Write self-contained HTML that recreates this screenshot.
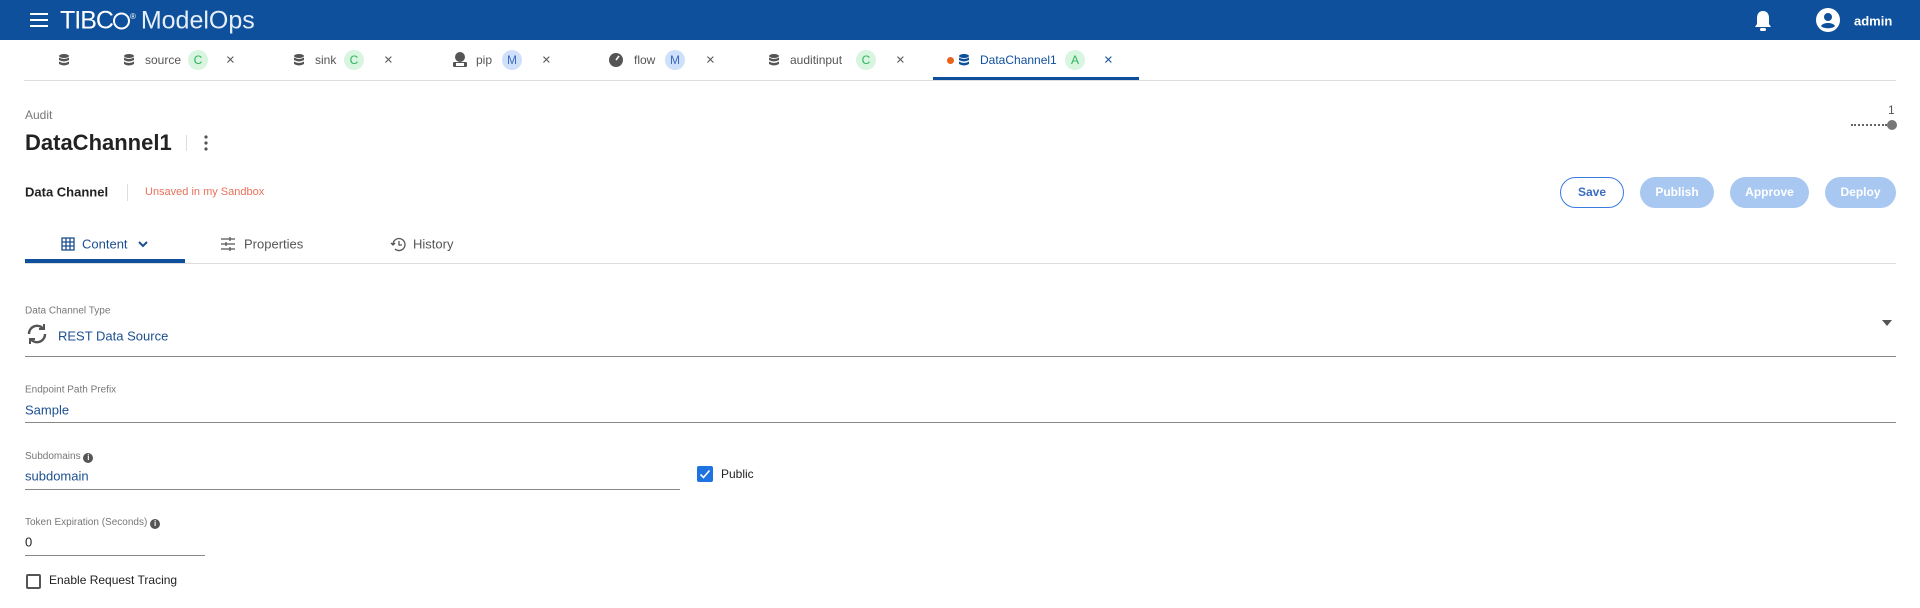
<!DOCTYPE html>
<html><head><meta charset="utf-8"><style>
*{margin:0;padding:0;box-sizing:border-box}
body{width:1920px;height:608px;background:#fff;font-family:"Liberation Sans",sans-serif;position:relative;overflow:hidden;color:#222}
.a{position:absolute;white-space:nowrap}
.c{transform:translateY(-50%)}
.hdr{position:absolute;left:0;top:0;width:1920px;height:40px;background:#0f509c}
.badge{position:absolute;width:20px;height:20px;border-radius:10px;font-size:12px;line-height:20px;text-align:center;transform:translateY(-50%)}
.bc{background:#d7f5df;color:#2fb35d}
.bm{background:#cfe0fa;color:#3a6cc0}
.tx{font-size:12px;color:#555}
.x{font-size:15px;color:#555}
.lbl{font-size:10px;color:#777}
.val{font-size:13px;color:#1d4f91}
.line{position:absolute;height:1px;background:#888}
.btn{position:absolute;top:177px;height:31px;border-radius:16px;font-size:12px;font-weight:bold;text-align:center;line-height:31px;color:#fff;background:#a8c8f2}
</style></head><body>
<div class="hdr"></div>
<svg class="a" style="left:30px;top:13px" width="18" height="14"><rect y="0" width="18" height="2" fill="#fff"/><rect y="6" width="18" height="2" fill="#fff"/><rect y="12" width="18" height="2" fill="#fff"/></svg>
<div class="a c" style="left:60px;top:21px;color:#fff;font-size:25px;letter-spacing:-1px">TIBC<span style="display:inline-block;width:17px;height:17px;border:2px solid #fff;border-radius:50%;vertical-align:-1px"></span><sup style="font-size:8px">®</sup> <span style="color:#e6eef8;letter-spacing:0">ModelOps</span></div>
<svg class="a" style="left:1754px;top:10px" width="18" height="22" viewBox="0 0 18 22"><path d="M9 1C5 1 3 4 3 8v6l-2 3h16l-2-3V8c0-4-2-7-6-7z" fill="#fff"/><rect x="6" y="18" width="6" height="3" rx="1.5" fill="#fff"/></svg>
<svg class="a" style="left:1816px;top:8px" width="24" height="24" viewBox="0 0 24 24"><circle cx="12" cy="12" r="12" fill="#fff"/><circle cx="12" cy="9" r="4" fill="#0f509c"/><path d="M5 18c2-4 12-4 14 0c-2 3-12 3-14 0z" fill="#0f509c"/></svg>
<div class="a c" style="left:1854px;top:21px;color:#fff;font-size:13px;font-weight:bold">admin</div>

<div class="line" style="left:24px;top:80px;width:1872px;background:#ddd"></div>
<div class="a" style="left:933px;top:77px;width:206px;height:3px;background:#0f509c"></div>
<svg width="0" height="0" style="position:absolute"><defs><g id="db"><ellipse cx="5" cy="2" rx="5" ry="2"/><path d="M0 3.5q5 3 10 0v2.5q-5 3-10 0z M0 7.5q5 3 10 0v2.5q-5 3-10 0z"/></g></defs></svg>
<svg class="a" style="left:59px;top:54px" width="10" height="13" fill="#555"><use href="#db"/></svg>
<svg class="a" style="left:124px;top:54px" width="10" height="13" fill="#555"><use href="#db"/></svg>
<div class="a c tx" style="left:145px;top:60px">source</div><div class="badge bc" style="left:188px;top:60px">C</div><div class="a c x" style="left:226px;top:60px">×</div>
<svg class="a" style="left:294px;top:54px" width="10" height="13" fill="#555"><use href="#db"/></svg>
<div class="a c tx" style="left:315px;top:60px">sink</div><div class="badge bc" style="left:344px;top:60px">C</div><div class="a c x" style="left:384px;top:60px">×</div>
<svg class="a" style="left:452px;top:52px" width="16" height="16" viewBox="0 0 16 16" fill="#555"><circle cx="8" cy="5" r="5"/><rect x="1" y="10" width="14" height="5" rx="1"/><rect x="4" y="11" width="8" height="3" fill="#fff"/></svg>
<div class="a c tx" style="left:476px;top:60px">pip</div><div class="badge bm" style="left:502px;top:60px">M</div><div class="a c x" style="left:542px;top:60px">×</div>
<svg class="a" style="left:609px;top:53px" width="14" height="14" viewBox="0 0 14 14"><circle cx="7" cy="7" r="7" fill="#555"/><path d="M7 7l3-4" stroke="#fff" stroke-width="1.5"/></svg>
<div class="a c tx" style="left:634px;top:60px">flow</div><div class="badge bm" style="left:665px;top:60px">M</div><div class="a c x" style="left:706px;top:60px">×</div>
<svg class="a" style="left:769px;top:54px" width="10" height="13" fill="#555"><use href="#db"/></svg>
<div class="a c tx" style="left:790px;top:60px">auditinput</div><div class="badge bc" style="left:856px;top:60px">C</div><div class="a c x" style="left:896px;top:60px">×</div>
<div class="a" style="left:947px;top:57px;width:7px;height:7px;border-radius:50%;background:#e8621c"></div>
<svg class="a" style="left:959px;top:54px" width="10" height="13" fill="#0f509c"><use href="#db"/></svg>
<div class="a c tx" style="left:980px;top:60px;color:#0f509c">DataChannel1</div><div class="badge bc" style="left:1065px;top:60px">A</div><div class="a c x" style="left:1104px;top:60px;color:#0f509c">×</div>

<div class="a c" style="left:25px;top:115px;font-size:12px;color:#777">Audit</div>
<div class="a c" style="left:25px;top:143px;font-size:22px;font-weight:bold;color:#222">DataChannel1</div>
<div class="a" style="left:186px;top:135px;width:1px;height:16px;background:#ddd"></div>
<svg class="a" style="left:204px;top:135px" width="4" height="16"><circle cx="2" cy="2" r="1.6" fill="#555"/><circle cx="2" cy="8" r="1.6" fill="#555"/><circle cx="2" cy="14" r="1.6" fill="#555"/></svg>
<div class="a c" style="left:1888px;top:110px;font-size:12px;color:#555">1</div>
<div class="a" style="left:1851px;top:124px;width:36px;border-top:2px dotted #666"></div>
<div class="a" style="left:1887px;top:120px;width:10px;height:10px;border-radius:50%;background:#777"></div>

<div class="a c" style="left:25px;top:192px;font-size:13px;font-weight:bold;color:#222">Data Channel</div>
<div class="a" style="left:127px;top:184px;width:1px;height:17px;background:#ddd"></div>
<div class="a c" style="left:145px;top:192px;font-size:11px;color:#e8715a">Unsaved in my Sandbox</div>
<div class="btn" style="left:1560px;width:64px;background:#fff;border:1px solid #3a7be0;color:#3a6cc0;line-height:29px">Save</div>
<div class="btn" style="left:1640px;width:74px">Publish</div>
<div class="btn" style="left:1730px;width:79px">Approve</div>
<div class="btn" style="left:1825px;width:71px">Deploy</div>

<div class="line" style="left:25px;top:263px;width:1871px;background:#ddd"></div>
<div class="a" style="left:25px;top:259px;width:160px;height:4px;background:#0f509c"></div>
<svg class="a" style="left:61px;top:237px" width="14" height="14" viewBox="0 0 14 14" fill="none" stroke="#1d4f91" stroke-width="1.3"><rect x="1" y="1" width="12" height="12"/><path d="M5 1v12M9 1v12M1 5h12M1 9h12"/></svg>
<div class="a c" style="left:82px;top:244px;font-size:13px;color:#1d4f91">Content</div>
<svg class="a" style="left:138px;top:241px" width="10" height="7"><path d="M1 1l4 4 4-4" stroke="#1d4f91" stroke-width="2" fill="none"/></svg>
<svg class="a" style="left:221px;top:236px" width="14" height="16" viewBox="0 0 14 16" stroke="#555" stroke-width="1.3"><path d="M0 3h14M0 8h14M0 13h14M9 1v4M5 6v4M9 11v4"/></svg>
<div class="a c" style="left:244px;top:244px;font-size:13px;color:#555">Properties</div>
<svg class="a" style="left:390px;top:237px" width="16" height="15" viewBox="0 0 16 15" fill="none" stroke="#555" stroke-width="1.3"><path d="M3 7.5a6 6 0 1 1 2 4.5"/><path d="M1 6l2 2 2-2M9 4v4h3"/></svg>
<div class="a c" style="left:413px;top:244px;font-size:13px;color:#555">History</div>

<div class="a c lbl" style="left:25px;top:311px">Data Channel Type</div>
<svg class="a" style="left:25px;top:322px" width="24" height="24" viewBox="0 0 24 24" fill="none" stroke="#555" stroke-width="2.4"><path d="M4 12a8 8 0 0 1 14-5.5M20 12a8 8 0 0 1-14 5.5"/><path d="M19 2v5h-5M5 22v-5h5" stroke-width="2"/></svg>
<div class="a c val" style="left:58px;top:336px">REST Data Source</div>
<svg class="a" style="left:1882px;top:320px" width="10" height="6"><path d="M0 0h10L5 6z" fill="#555"/></svg>
<div class="line" style="left:25px;top:356px;width:1871px"></div>

<div class="a c lbl" style="left:25px;top:390px">Endpoint Path Prefix</div>
<div class="a c val" style="left:25px;top:410px">Sample</div>
<div class="line" style="left:25px;top:422px;width:1871px"></div>

<div class="a c lbl" style="left:25px;top:457px">Subdomains <span style="display:inline-block;width:10px;height:10px;border-radius:50%;background:#555;color:#fff;font-size:8px;line-height:10px;text-align:center;font-weight:bold;vertical-align:-1px">i</span></div>
<div class="a c val" style="left:25px;top:476px">subdomain</div>
<div class="line" style="left:25px;top:489px;width:655px"></div>
<div class="a" style="left:697px;top:466px;width:16px;height:16px;background:#1e73e0;border-radius:2px"></div>
<svg class="a" style="left:697px;top:466px" width="16" height="16"><path d="M3.5 8.5l3 3 6-7" stroke="#fff" stroke-width="1.6" fill="none"/></svg>
<div class="a c" style="left:721px;top:474px;font-size:12px;color:#222">Public</div>

<div class="a c lbl" style="left:25px;top:523px">Token Expiration (Seconds) <span style="display:inline-block;width:10px;height:10px;border-radius:50%;background:#555;color:#fff;font-size:8px;line-height:10px;text-align:center;font-weight:bold;vertical-align:-1px">i</span></div>
<div class="a c" style="left:25px;top:542px;font-size:13px;color:#222">0</div>
<div class="line" style="left:25px;top:555px;width:180px"></div>
<div class="a" style="left:26px;top:574px;width:15px;height:15px;border:2px solid #555;border-radius:2px"></div>
<div class="a c" style="left:49px;top:580px;font-size:12px;color:#222">Enable Request Tracing</div>
</body></html>
